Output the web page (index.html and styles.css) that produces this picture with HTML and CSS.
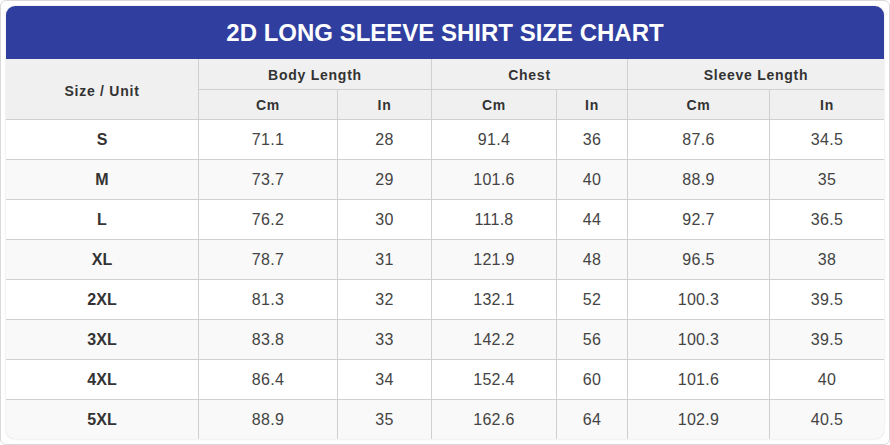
FILE: index.html
```html
<!DOCTYPE html>
<html lang="en">
<head>
<meta charset="utf-8">
<title>2D Long Sleeve Shirt Size Chart</title>
<link rel="stylesheet" href="styles.css">
</head>
<body>
<div class="frame">
  <div class="card">
    <div class="title">2D LONG SLEEVE SHIRT SIZE CHART</div>
    <div class="grid">
      <div class="th span-rows">Size / Unit</div>
      <div class="th span-cols">Body Length</div>
      <div class="th span-cols">Chest</div>
      <div class="th span-cols">Sleeve Length</div>
      <div class="th">Cm</div><div class="th">In</div>
      <div class="th">Cm</div><div class="th">In</div>
      <div class="th">Cm</div><div class="th">In</div>

      <div class="size">S</div><div class="num">71.1</div><div class="num">28</div><div class="num">91.4</div><div class="num">36</div><div class="num">87.6</div><div class="num">34.5</div>
      <div class="size alt">M</div><div class="num alt">73.7</div><div class="num alt">29</div><div class="num alt">101.6</div><div class="num alt">40</div><div class="num alt">88.9</div><div class="num alt">35</div>
      <div class="size">L</div><div class="num">76.2</div><div class="num">30</div><div class="num">111.8</div><div class="num">44</div><div class="num">92.7</div><div class="num">36.5</div>
      <div class="size alt">XL</div><div class="num alt">78.7</div><div class="num alt">31</div><div class="num alt">121.9</div><div class="num alt">48</div><div class="num alt">96.5</div><div class="num alt">38</div>
      <div class="size">2XL</div><div class="num">81.3</div><div class="num">32</div><div class="num">132.1</div><div class="num">52</div><div class="num">100.3</div><div class="num">39.5</div>
      <div class="size alt">3XL</div><div class="num alt">83.8</div><div class="num alt">33</div><div class="num alt">142.2</div><div class="num alt">56</div><div class="num alt">100.3</div><div class="num alt">39.5</div>
      <div class="size">4XL</div><div class="num">86.4</div><div class="num">34</div><div class="num">152.4</div><div class="num">60</div><div class="num">101.6</div><div class="num">40</div>
      <div class="size alt">5XL</div><div class="num alt">88.9</div><div class="num alt">35</div><div class="num alt">162.6</div><div class="num alt">64</div><div class="num alt">102.9</div><div class="num alt">40.5</div>
    </div>
  </div>
</div>
</body>
</html>
```

FILE: styles.css
```css
* { box-sizing: border-box; }

html, body {
  margin: 0;
  padding: 0;
  background: #ffffff;
}

body {
  font-family: "Liberation Sans", Arial, sans-serif;
}

.frame {
  width: 890px;
  height: 445px;
  border: 1px solid #d9d9d9;
  border-radius: 6px;
  padding: 5px;
  background: #ffffff;
}

.card {
  width: 878px;
  height: 433px;
  border-radius: 9px;
  overflow: hidden;
  box-shadow: 0 0 2px rgba(0, 0, 0, 0.18);
  background: #ffffff;
}

.title {
  height: 53px;
  background: #303f9f;
  color: #ffffff;
  font-size: 24px;
  font-weight: bold;
  display: flex;
  align-items: center;
  justify-content: center;
}

.grid {
  display: grid;
  grid-template-columns: 192px 138px 93px 124px 70px 141px 114px;
  grid-template-rows: 30px 29px repeat(8, 39px);
  gap: 1px;
  background: #d0d0d0;
}

.grid > div {
  display: flex;
  align-items: center;
  justify-content: center;
}

.th {
  background: #f0f0f0;
  color: #333333;
  font-size: 14px;
  font-weight: bold;
  letter-spacing: 0.75px;
  padding-top: 1px;
}

.span-rows { grid-row: span 2; padding-top: 3px; }
.span-cols { grid-column: span 2; padding-top: 2px; }

.size {
  background: #ffffff;
  color: #333333;
  font-size: 16px;
  font-weight: bold;
}

.num {
  background: #ffffff;
  color: #444444;
  font-size: 16px;
  letter-spacing: 0.3px;
}

.size.alt, .num.alt {
  background: #f9f9f9;
}
```
